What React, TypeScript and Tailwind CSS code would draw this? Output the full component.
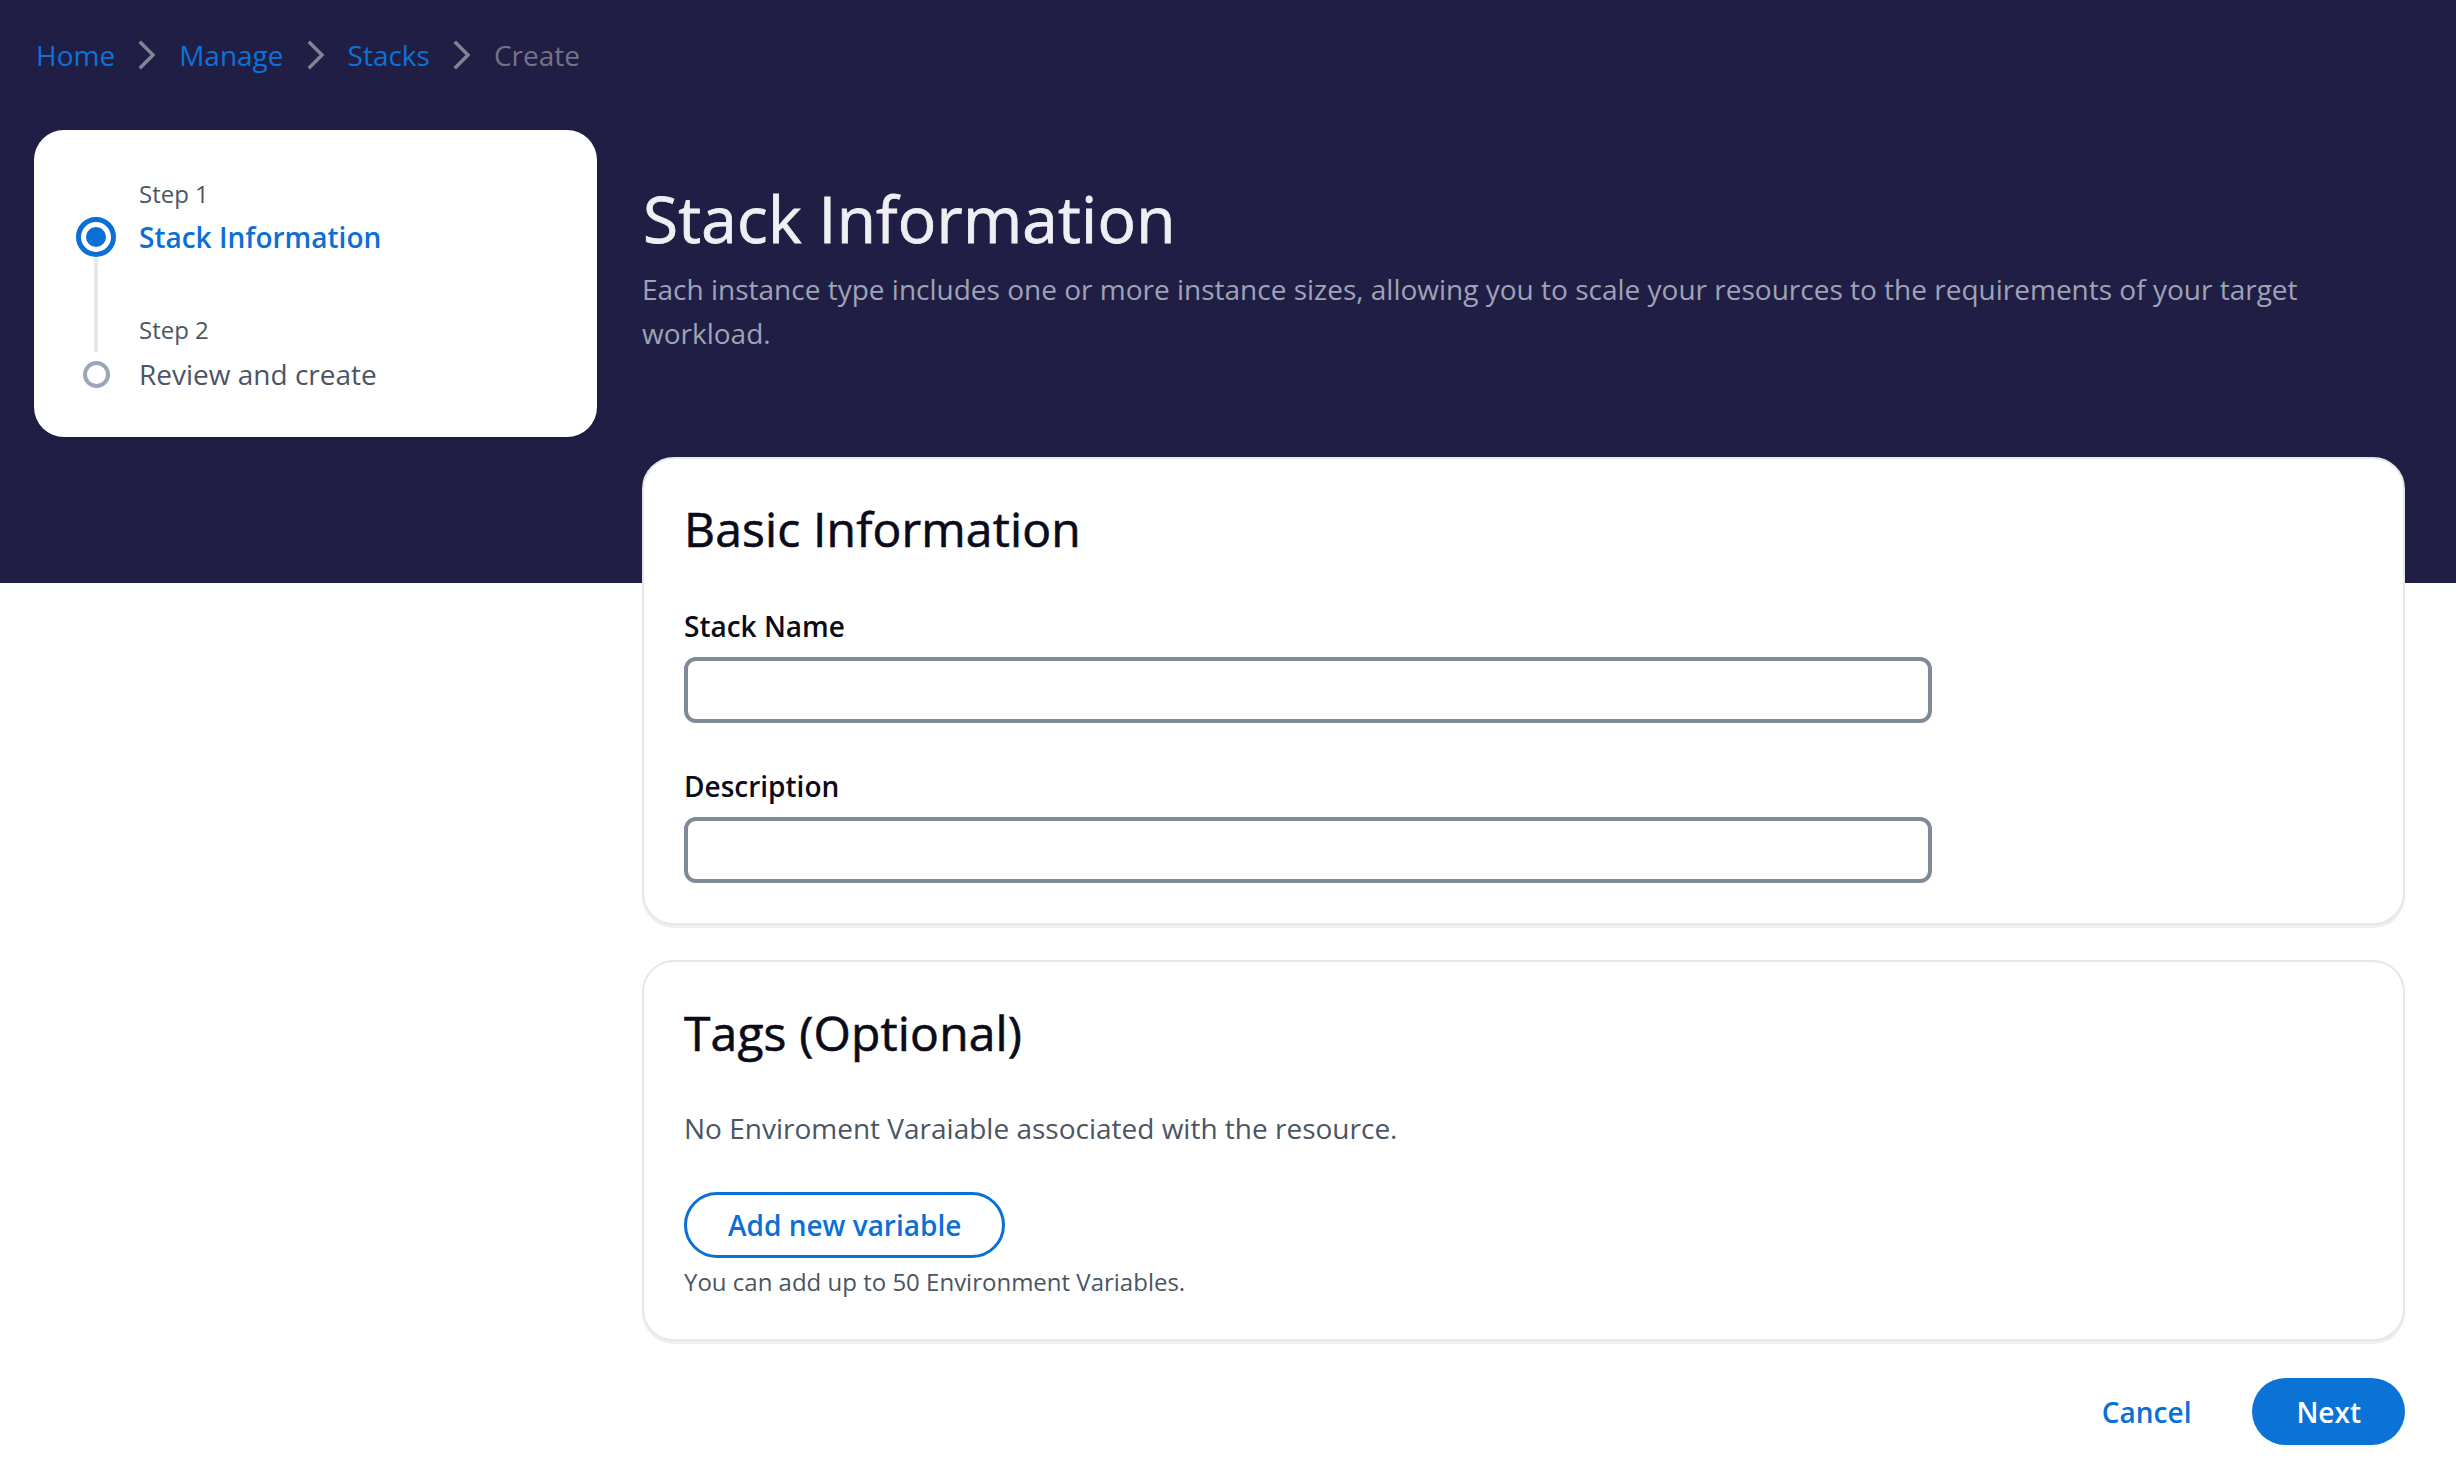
import React from "react";

function Chevron() {
  return (
    <svg width="18" height="30" viewBox="0 0 18 30" fill="none" aria-hidden="true">
      <polyline points="3,3 15,15 3,27" stroke="#7e8593" strokeWidth="3.5" strokeLinecap="square" strokeLinejoin="miter" />
    </svg>
  );
}

export default function App() {
  return (
    <div className="min-h-[1484px] w-full bg-[linear-gradient(to_bottom,#201e45_0px,#201e45_583px,#ffffff_583px)] font-['Open_Sans',sans-serif] pl-[34px] pr-[51px] pt-[34px]">
      {/* Breadcrumb */}
      <nav className="flex items-center gap-[23px] pl-[2px] text-[28px] leading-[42px]">
        <a className="text-[#0b72d8]">Home</a>
        <Chevron />
        <a className="text-[#0b72d8]">Manage</a>
        <Chevron />
        <a className="text-[#0b72d8]">Stacks</a>
        <Chevron />
        <span className="text-[#6f7584]">Create</span>
      </nav>

      <div className="mt-[54px] flex items-start gap-[45px]">
        {/* Stepper */}
        <aside className="w-[563px] shrink-0 rounded-[30px] bg-white pl-[42px] pt-[46px] pb-[42px] shadow-[0_2px_3px_rgba(0,0,0,0.10)]">
          <div className="flex flex-col">
            <div className="flex">
              <div className="w-[40px] shrink-0" />
              <div className="ml-[23px] text-[24px] leading-[36px] text-[#4b5563]">Step 1</div>
            </div>
            <div className="mt-[4px] flex items-center">
              <div className="flex w-[40px] shrink-0 justify-center">
                <div className="flex h-[40px] w-[40px] items-center justify-center rounded-full border-[5px] border-[#0b6fd6] bg-white">
                  <div className="h-[20px] w-[20px] rounded-full bg-[#0b6fd6]" />
                </div>
              </div>
              <div className="ml-[23px] text-[28px] font-semibold leading-[42px] text-[#0b6fd6]">Stack Information</div>
            </div>
            <div className="flex">
              <div className="flex w-[40px] shrink-0 justify-center">
                <div className="w-[4px] bg-[#e5e7eb]" />
              </div>
              <div className="ml-[23px] pt-[54px] pb-[4px] text-[24px] leading-[36px] text-[#4b5563]">Step 2</div>
            </div>
            <div className="mt-[1px] flex items-center">
              <div className="flex w-[40px] shrink-0 justify-center">
                <div className="h-[27px] w-[27px] rounded-full border-[4px] border-[#9ba6b8] bg-white" />
              </div>
              <div className="ml-[23px] text-[28px] leading-[42px] text-[#4b5563]">Review and create</div>
            </div>
          </div>
        </aside>

        {/* Main */}
        <main className="min-w-0 flex-1 pt-[49px]">
          <h1 className="pl-[1px] text-[64px] font-medium leading-[80px] tracking-[0.2px] text-[#efeff3] [-webkit-text-stroke:0.8px_#efeff3]">Stack Information</h1>
          <p className="mt-[8px] text-[28px] leading-[44px] text-[#9ea3b5]">
            Each instance type includes one or more instance sizes, allowing you to scale your resources to the requirements of your target workload.
          </p>

          <section className="mt-[102px] rounded-[32px] border-2 border-[#e6e7ea] bg-white p-[40px] shadow-[0_3px_1px_rgba(0,0,0,0.07)]">
            <h2 className="text-[48px] font-medium leading-[60px] tracking-[0.15px] text-[#0b0b1a] [-webkit-text-stroke:0.6px_#0b0b1a]">Basic Information</h2>
            <label className="mt-[46px] block text-[28px] font-semibold leading-[42px] text-[#0b0b1a]">Stack Name</label>
            <input className="mt-[10px] block h-[66px] w-[1248px] rounded-[12px] border-[4px] border-[#7f8997] bg-white px-[20px] text-[28px] outline-none" />
            <label className="mt-[42px] block text-[28px] font-semibold leading-[42px] text-[#0b0b1a]">Description</label>
            <input className="mt-[10px] block h-[66px] w-[1248px] rounded-[12px] border-[4px] border-[#7f8997] bg-white px-[20px] text-[28px] outline-none" />
          </section>

          <section className="mt-[35px] rounded-[32px] border-2 border-[#e6e7ea] bg-white px-[40px] pt-[41px] pb-[40px] shadow-[0_3px_1px_rgba(0,0,0,0.07)]">
            <h2 className="text-[48px] font-medium leading-[60px] tracking-[0.15px] text-[#0b0b1a] [-webkit-text-stroke:0.6px_#0b0b1a]">Tags (Optional)</h2>
            <p className="mt-[44px] text-[28px] leading-[42px] text-[#4b5563]">No Enviroment Varaiable associated with the resource.</p>
            <button className="mt-[43px] flex h-[66px] items-center rounded-full border-[3px] border-[#0b70d6] bg-white px-[41px] text-[28px] font-semibold text-[#0b70d6]">
              Add new variable
            </button>
            <p className="mt-[7px] text-[24px] leading-[34px] text-[#4b5563]">You can add up to 50 Environment Variables.</p>
          </section>

          <div className="mt-[37px] flex items-center justify-end gap-[61px]">
            <button className="text-[28px] font-semibold text-[#0b70d6]">Cancel</button>
            <button className="flex h-[67px] items-center rounded-full bg-[#0b72d6] px-[44px] text-[28px] font-semibold text-white">Next</button>
          </div>
        </main>
      </div>
    </div>
  );
}
